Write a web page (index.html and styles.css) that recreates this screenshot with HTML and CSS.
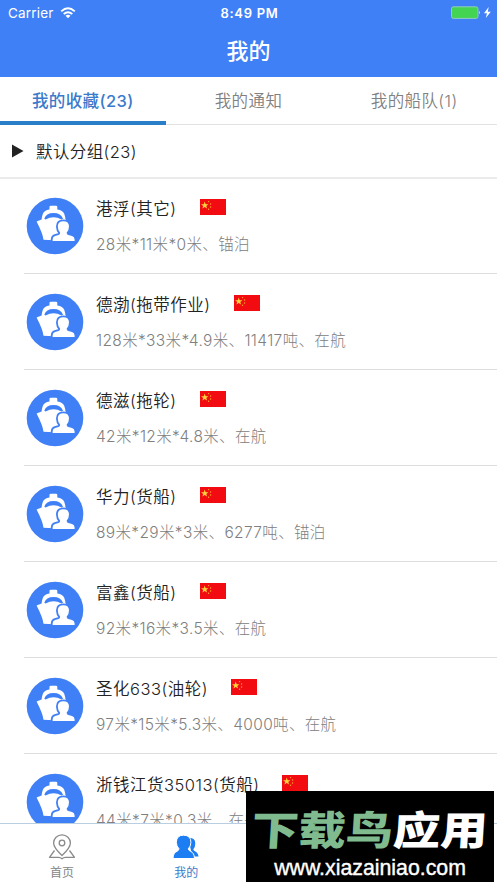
FILE: index.html
```html
<!DOCTYPE html>
<html lang="zh-CN">
<head>
    <meta charset="UTF-8">
    <meta name="viewport" content="width=device-width, initial-scale=1.0">
    <title>我的</title>
    <link rel="stylesheet" href="styles.css">
</head>
<body>
    <!-- shared icons -->
    <svg class="defs" width="0" height="0">
        <symbol id="ship" viewBox="0 0 58 58">
            <circle cx="29" cy="29" r="28.3" fill="#4080f6"/>
            <path d="M23.5 12.500V10q0-1.300 1.300-1.300h5.200q1.300 0 1.300 1.300v2.500q5.500.8 7 4.500.9 2.500 1.200 5.500l2 1.500V34L28 43.200l-10.500-.5q-.6-6-6.900-18.200l5-2q.3-3 1.200-5.500 1.400-3.700 6.700-4.500z" fill="#fff"/>
            <path d="M18.300 21.800Q20 16 27.500 16T37 21.800L35.600 22.400Q27.500 18.300 19.600 22.400z" fill="#4080f6"/>
            <path d="M34.200 35.800Q31.800 33.200 31.800 29.500q0-5.200 5.600-5.200t5.600 5.200q0 3.700-2.400 6.300.1 1.700 1.700 2.100l3.700 1q2.600.8 2.600 3.600v1.600H26.600v-1.600q0-2.800 2.400-3.600l3.500-1q1.600-.4 1.700-2.100z" fill="#fff" stroke="#4080f6" stroke-width="3.600" paint-order="stroke"/>
        </symbol>
        <symbol id="flag" viewBox="0 0 26 16">
            <path d="M0 0h26v16H0z" fill="#f20c12"/>
            <path d="M4.700 2.600l1 2.600 2.700.1-2.100 1.700.8 2.600-2.400-1.500-2.300 1.500.8-2.600-2.100-1.700 2.700-.1z" fill="#ffd23c"/>
            <circle cx="8.600" cy="2.600" r=".7" fill="#f9a825"/>
            <circle cx="10.600" cy="5" r=".7" fill="#f9a825"/>
            <circle cx="10.600" cy="8" r=".7" fill="#f9a825"/>
            <circle cx="8.600" cy="10.200" r=".7" fill="#f9a825"/>
        </symbol>
    </svg>

    <div class="app">
        <header class="header">
            <div class="status">
                <div class="carrier">
                    <span>Carrier</span>
                    <svg width="16" height="12" viewBox="0 0 16 12" fill="none" stroke="#fff" stroke-width="1.9">
                        <path d="M1.2 4.4Q8-1.7 14.8 4.4M3.7 7Q8 3.3 12.3 7"/>
                        <path d="M5.5 8.7Q8 6.7 10.5 8.7L8 11.3z" fill="#fff" stroke="none"/>
                    </svg>
                </div>
                <div class="time">8:49 PM</div>
                <div class="battery">
                    <svg width="40" height="14" viewBox="0 0 40 14">
                        <rect x=".5" y=".8" width="26.5" height="11.6" rx="1.8" fill="#43d551" stroke="#8fc9c4"/>
                        <path d="M28.3 4.8q1.6 1.8 0 3.6z" fill="#fff"/>
                        <path d="M37.7 1L33 7.3h3L34.8 12l5-6.2h-3z" fill="#fff"/>
                    </svg>
                </div>
            </div>
            <h1 class="title">我的</h1>
        </header>

        <nav class="tabs">
            <div class="tab active">我的收藏(23)</div>
            <div class="tab">我的通知</div>
            <div class="tab">我的船队(1)</div>
        </nav>

        <div class="group">
            <svg width="12" height="14" viewBox="0 0 12 14"><path d="M0 .5L11.5 7 0 13.5z" fill="#222"/></svg>
            <span>默认分组(23)</span>
        </div>

        <main class="list">
            <div class="row">
                <svg class="avatar"><use href="#ship"/></svg>
                <div class="info">
                    <div class="name">港浮(其它)<svg class="flag"><use href="#flag"/></svg></div>
                    <div class="detail">28米*11米*0米、锚泊</div>
                </div>
            </div>
            <div class="row">
                <svg class="avatar"><use href="#ship"/></svg>
                <div class="info">
                    <div class="name">德渤(拖带作业)<svg class="flag"><use href="#flag"/></svg></div>
                    <div class="detail">128米*33米*4.9米、11417吨、在航</div>
                </div>
            </div>
            <div class="row">
                <svg class="avatar"><use href="#ship"/></svg>
                <div class="info">
                    <div class="name">德滋(拖轮)<svg class="flag"><use href="#flag"/></svg></div>
                    <div class="detail">42米*12米*4.8米、在航</div>
                </div>
            </div>
            <div class="row">
                <svg class="avatar"><use href="#ship"/></svg>
                <div class="info">
                    <div class="name">华力(货船)<svg class="flag"><use href="#flag"/></svg></div>
                    <div class="detail">89米*29米*3米、6277吨、锚泊</div>
                </div>
            </div>
            <div class="row">
                <svg class="avatar"><use href="#ship"/></svg>
                <div class="info">
                    <div class="name">富鑫(货船)<svg class="flag"><use href="#flag"/></svg></div>
                    <div class="detail">92米*16米*3.5米、在航</div>
                </div>
            </div>
            <div class="row">
                <svg class="avatar"><use href="#ship"/></svg>
                <div class="info">
                    <div class="name">圣化633(油轮)<svg class="flag"><use href="#flag"/></svg></div>
                    <div class="detail">97米*15米*5.3米、4000吨、在航</div>
                </div>
            </div>
            <div class="row">
                <svg class="avatar"><use href="#ship"/></svg>
                <div class="info">
                    <div class="name">浙钱江货35013(货船)<svg class="flag"><use href="#flag"/></svg></div>
                    <div class="detail">44米*7米*0.3米、在航</div>
                </div>
            </div>
        </main>

        <footer class="tabbar">
            <div class="item">
                <svg width="28" height="26" viewBox="0 0 28 26" fill="none" stroke="#8a8a8a" stroke-width="1.3" stroke-linejoin="round">
                    <path d="M14 21.5Q5.6 13.8 5.6 9a8.4 8.2 0 0 1 16.8 0Q22.4 13.8 14 21.5z"/>
                    <circle cx="14" cy="9" r="2.8"/>
                    <path d="M6.5 16.5L1.5 23.3h9q2 0 3.5 1.4 1.5-1.4 3.5-1.4h9L21.5 16.5"/>
                </svg>
                <span>首页</span>
            </div>
            <div class="item active">
                <svg width="28" height="26" viewBox="0 0 28 26" fill="#1c7ef2">
                    <path d="M16 4.200q7-.8 7.300 5 0 3.600-2 6 .2 1.600 2 2.200 2.800 1.200 3.200 5.200h-6z"/>
                    <path d="M11.500 1.200q7.400 0 7.400 7.200 0 3.900-2.600 6.400.2 1.600 2.200 2.500 3.800 1.500 4 7.200H1q.2-5.700 4-7.200 1.900-.9 2-2.500-2.600-2.500-2.600-6.400 0-7.200 7.100-7.200z" stroke="#fff"/>
                </svg>
                <span>我的</span>
            </div>
            <div class="item"></div>
            <div class="item"></div>
        </footer>

        <div class="watermark">
            <div class="brand"><span>下载鸟</span>应用</div>
            <div class="site">www.xiazainiao.com</div>
        </div>
    </div>
</body>
</html>
```
FILE: styles.css
```css
* {
    box-sizing: border-box;
}
body {
    margin: 0;
    background-color: #ffffff;
    color: #222222;
    font-family: Inter, "Noto Sans CJK SC", sans-serif;
}
.defs {
    display: block;
}
.app {
    position: relative;
    display: flex;
    flex-direction: column;
    height: 883px;
    overflow: hidden;
}
.header {
    height: 77px;
    flex-shrink: 0;
    background-color: #4080f6;
    color: #ffffff;
}
.status {
    display: grid;
    grid-template-columns: 1fr auto 1fr;
    align-items: center;
    height: 26px;
    padding: 0 6px 0 8px;
    font-size: 13.5px;
}
.carrier {
    display: flex;
    align-items: center;
    gap: 6px;
    letter-spacing: 0.2px;
}
.time {
    font-weight: 600;
    font-size: 13px;
    letter-spacing: 0.7px;
}
.battery {
    display: flex;
    justify-content: flex-end;
}
.title {
    margin: 0;
    height: 48px;
    line-height: 50px;
    text-align: center;
    font-size: 22px;
    font-weight: 500;
}
.tabs {
    display: grid;
    grid-template-columns: repeat(3, 1fr);
    height: 48px;
    flex-shrink: 0;
    border-bottom: 1px solid #e2e2e2;
}
.tab {
    height: 48px;
    padding-top: 1px;
    line-height: 47px;
    text-align: center;
    font-size: 16.5px;
    font-weight: 350;
    letter-spacing: 0.4px;
    color: #808080;
}
.tab.active {
    color: #3b7acb;
    font-weight: 500;
    border-bottom: 4px solid #2a80c8;
}
.group {
    display: flex;
    align-items: center;
    gap: 12px;
    height: 54px;
    flex-shrink: 0;
    padding-left: 12px;
    border-bottom: 2px solid #ebebeb;
    font-size: 16.5px;
    font-weight: 350;
    letter-spacing: 0.4px;
}
.list {
    flex: 1;
    min-height: 0;
    overflow: hidden;
    margin-left: 24px;
}
.row {
    display: flex;
    gap: 13px;
    height: 96px;
    padding-left: 2px;
    border-bottom: 1px solid #dddddd;
}
.row:first-child {
    height: 95px;
}
.row:first-child .avatar {
    margin-top: 18px;
}
.row:first-child .info {
    padding-top: 15px;
}
.avatar {
    width: 58px;
    height: 58px;
    margin-top: 19px;
}
.info {
    padding-top: 16px;
    margin-left: -1px;
}
.name {
    display: flex;
    align-items: center;
    height: 27px;
    font-size: 16.5px;
    font-weight: 350;
    letter-spacing: 0.5px;
}
.flag {
    width: 26px;
    height: 16px;
    margin-left: 23px;
    margin-top: -1px;
}
.detail {
    height: 44px;
    line-height: 47px;
    font-size: 15.5px;
    font-weight: 300;
    letter-spacing: 0.35px;
    color: #808080;
    white-space: nowrap;
}
.tabbar {
    display: grid;
    grid-template-columns: repeat(4, 1fr);
    height: 60px;
    flex-shrink: 0;
    border-top: 1px solid #b9cee0;
    background-color: #ffffff;
}
.item {
    display: flex;
    flex-direction: column;
    align-items: center;
    padding-top: 10px;
    font-size: 12px;
    line-height: 25px;
    color: #858585;
}
.item.active {
    color: #3b7acb;
}
.watermark {
    position: absolute;
    left: 246px;
    bottom: 1px;
    width: 248px;
    height: 91px;
    background-color: #000000;
    color: #ffffff;
    text-align: center;
    white-space: nowrap;
}
.brand {
    height: 64px;
    padding-top: 10px;
    line-height: 60px;
    font-size: 40px;
    font-weight: 900;
    transform: scaleX(1.18) skewX(-3deg);
}
.brand span {
    color: #7fbb8e;
}
.site {
    line-height: 26px;
    font-family: "Liberation Sans", sans-serif;
    font-size: 21.3px;
    -webkit-text-stroke: 0.4px #ffffff;
}
```
